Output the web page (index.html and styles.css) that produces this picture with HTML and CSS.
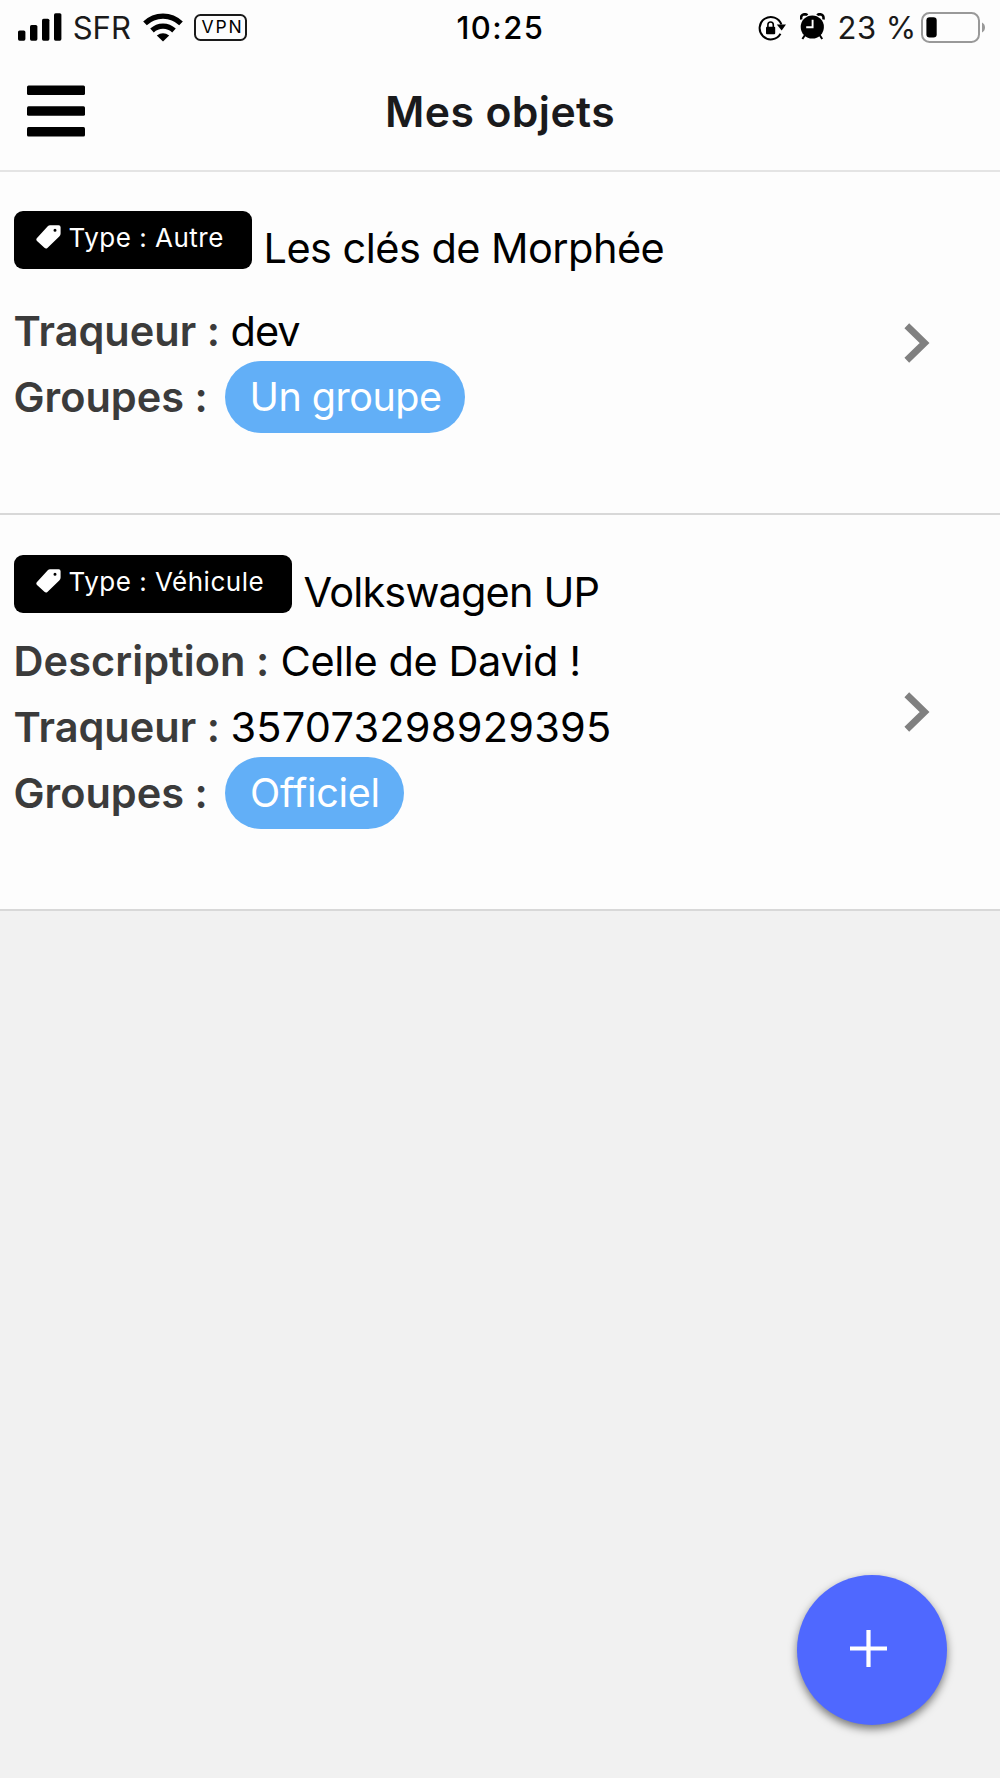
FILE: index.html
```
<!DOCTYPE html>
<html lang="fr">
<head>
<meta charset="utf-8">
<title>Mes objets</title>
<link rel="stylesheet" href="styles.css">
</head>
<body>
<div class="status">
  <div class="status-left">
    <svg class="signal" width="44" height="28" viewBox="0 0 44 28"><rect x="0" y="17.5" width="7.4" height="10.2" rx="1.6"/><rect x="12" y="12" width="7.4" height="15.7" rx="1.6"/><rect x="24" y="5.700" width="7.400" height="22" rx="1.600"/><rect x="36" y="0.200" width="7.400" height="27.500" rx="1.600"/></svg>
    <span class="carrier">SFR</span>
    <svg class="wifi" width="40" height="29" viewBox="0 0 40 29"><g fill="none" stroke="#000" stroke-width="5.200"><path d="M2 10.400C12 0.600 28 0.600 38 10.400"/><path d="M9 17.500C15.300 11.600 24.700 11.600 31 17.500"/></g><path d="M20 28.500L13.800 22.600Q20 17.800 26.200 22.600Z"/></svg>
    <span class="vpn">VPN</span>
  </div>
  <div class="clock">10:25</div>
  <div class="status-right">
    <svg class="lock" width="28" height="26" viewBox="0 0 28 26"><path d="M22.500 18.800A11.200 11.200 0 1 1 23.400 9.500" fill="none" stroke="#000" stroke-width="2"/><path d="M18.800 9.600H28L23.700 15.400Z"/><rect x="8" y="11.800" width="9.200" height="7.400" rx="1"/><path d="M9.900 12.500V9.700a2.700 2.700 0 0 1 5.400 0V12.500" fill="none" stroke="#000" stroke-width="1.600"/></svg>
    <svg class="alarm" width="25" height="27" viewBox="0 0 25 27"><circle cx="12.300" cy="14" r="11.600"/><path d="M5 22L2.400 26M19.600 22l2.600 4" stroke="#000" stroke-width="2"/><path d="M1.200 6.600Q.3 1.500 4.800 1.200Q6.500 1.200 7.300 2.200M23.400 6.600Q24.300 1.500 19.800 1.200Q18.100 1.200 17.300 2.200" fill="none" stroke="#000" stroke-width="2.600"/><path d="M12.600 6.800V14.300H6.200" fill="none" stroke="#fff" stroke-width="1.900"/></svg>
    <span class="percent">23 %</span>
    <svg class="battery" width="64" height="31" viewBox="0 0 64 31"><rect x="1" y="1" width="57" height="29" rx="7.500" fill="none" stroke="#999" stroke-width="2"/><rect x="5.400" y="5.200" width="10.300" height="20.200" rx="3.200"/><path d="M61 10.500Q64 12.200 64 15.500T61 20.500Z" fill="#999"/></svg>
  </div>
</div>
<header class="header">
  <svg class="menu" width="58" height="52" viewBox="0 0 58 52"><rect y="0.500" width="58" height="9.500" rx="1.500"/><rect y="21.300" width="58" height="9.500" rx="1.500"/><rect y="42" width="58" height="9.500" rx="1.500"/></svg>
  <h1 class="title">Mes objets</h1>
</header>
<main>
  <section class="item">
    <div class="body">
      <div class="head">
        <span class="badge"><svg class="tag" width="25" height="24" viewBox="0 0 25 24"><path fill-rule="evenodd" d="M14 .2H22.600Q24.600 .2 24.600 2.200V8.600Q24.600 10.200 23.500 11.300L11.400 23Q9.900 24.300 8.400 22.800L1 16Q-.4 14.600 1 13.100L12 1.100Q12.900 .2 14 .2ZM19 3.800a1.500 1.500 0 1 0 0 3a1.500 1.500 0 1 0 0-3Z"/></svg>Type : Autre</span>
        <span class="name">Les clés de Morphée</span>
      </div>
      <div class="line"><b class="label">Traqueur :</b><span class="value dev">dev</span></div>
      <div class="line"><b class="label groups">Groupes :</b><span class="pill">Un groupe</span></div>
    </div>
    <svg class="chevron" width="26" height="40" viewBox="0 0 26 40"><path d="M2.800 2.700L20.600 20L2.800 37.300" fill="none" stroke="#808080" stroke-width="6.800"/></svg>
  </section>
  <section class="item second">
    <div class="body">
      <div class="head">
        <span class="badge"><svg class="tag" width="25" height="24" viewBox="0 0 25 24"><path fill-rule="evenodd" d="M14 .2H22.600Q24.600 .2 24.600 2.200V8.600Q24.600 10.200 23.500 11.300L11.400 23Q9.900 24.300 8.400 22.800L1 16Q-.4 14.600 1 13.100L12 1.100Q12.900 .2 14 .2ZM19 3.800a1.500 1.500 0 1 0 0 3a1.500 1.500 0 1 0 0-3Z"/></svg>Type : Véhicule</span>
        <span class="name">Volkswagen UP</span>
      </div>
      <div class="line"><b class="label description">Description :</b><span class="value text">Celle de David !</span></div>
      <div class="line"><b class="label">Traqueur :</b><span class="value number">357073298929395</span></div>
      <div class="line"><b class="label groups">Groupes :</b><span class="pill official">Officiel</span></div>
    </div>
    <svg class="chevron" width="26" height="40" viewBox="0 0 26 40"><path d="M2.800 2.700L20.600 20L2.800 37.300" fill="none" stroke="#808080" stroke-width="6.800"/></svg>
  </section>
</main>
<button class="fab" aria-label="Ajouter"><svg width="37" height="37" viewBox="0 0 37 37"><path d="M18.500 0V37M0 18.500H37" stroke="#fff" stroke-width="4.200"/></svg></button>
</body>
</html>
```
FILE: styles.css
```
* { box-sizing: border-box; }
body {
  margin: 0;
  min-height: 1778px;
  background: #f1f1f1;
  color: #000;
  font-family: Inter, "Liberation Sans", sans-serif;
  white-space: nowrap;
}
svg { display: block; flex: none; }

.status {
  display: grid;
  grid-template-columns: 1fr auto 1fr;
  align-items: center;
  height: 54px;
  background: #fdfdfd;
  font-size: 31px;
  line-height: 55px;
}
.status-left, .status-right { display: flex; align-items: center; height: 54px; }
.status-left { padding-left: 17.700px; }
.status-right { justify-content: flex-end; padding-right: 15px; }
.signal { margin-top: -1.600px; }
.carrier { width: 58px; margin-left: 11px; color: #1a1a1a; }
.wifi { margin-left: 12.500px; }
.vpn {
  width: 53px;
  height: 26.500px;
  margin-left: 11.300px;
  padding-left: 5px;
  border: 2px solid #1a1a1a;
  border-radius: 6.500px;
  font-size: 17.500px;
  line-height: 22.500px;
  letter-spacing: 1.900px;
}
.clock { font-weight: 500; letter-spacing: 1.500px; padding-left: 1px; }
.lock { margin-right: 14px; }
.alarm { margin: -2px 13px 0 0; }
.percent { width: 76px; margin-right: 7.500px; color: #1a1a1a; letter-spacing: .5px; }
.battery { margin-top: -1px; }

.header {
  display: grid;
  grid-template-columns: 1fr auto 1fr;
  align-items: center;
  height: 118px;
  padding-left: 27px;
  padding-right: 27px;
  border-bottom: 2px solid #e4e4e4;
  background: #fdfdfd;
}
.menu { margin-top: -2px; }
.title {
  margin: 0;
  color: #1a1a1c;
  font-size: 42.700px;
  line-height: 60px;
  font-weight: 600;
  letter-spacing: .4px;
}

.item {
  display: flex;
  align-items: center;
  justify-content: space-between;
  height: 343px;
  padding: 0 70px 0 13.500px;
  border-bottom: 2px solid #d8d8d8;
  background: #fdfdfd;
}
.item.second { height: 396px; }
.body { align-self: flex-start; padding-top: 39px; }
.second .body { padding-top: 40px; }
.head { display: flex; height: 58px; margin-bottom: 29px; }
.second .head { margin-bottom: 15px; }
.badge {
  display: flex;
  align-items: center;
  width: 238px;
  height: 58px;
  padding: 0 0 5px 22px;
  border-radius: 9px;
  background: #000;
  color: #fff;
  font-size: 26px;
  letter-spacing: .5px;
}
.second .badge { width: 278px; }
.tag { margin: -1px 8px 0 0; fill: #fff; }
.name {
  padding-top: 8px;
  margin-left: 12px;
  font-size: 41.500px;
  line-height: 58px;
  letter-spacing: -.54px;
}
.second .name { letter-spacing: -.85px; }
.line {
  display: flex;
  align-items: center;
  height: 66px;
  font-size: 41.500px;
  line-height: 66px;
}
.label { width: 217px; color: #3b3b3b; font-weight: 600; }
.label.groups { width: 211.500px; }
.label.description { width: 267px; letter-spacing: .07px; }
.dev { letter-spacing: -1px; }
.text { letter-spacing: -.41px; }
.number { letter-spacing: .22px; }
.pill {
  width: 240px;
  height: 72px;
  padding-left: 24.500px;
  border-radius: 36px;
  background: #62aff7;
  color: #fff;
  font-size: 39.500px;
  line-height: 73px;
  letter-spacing: -.5px;
}
.pill.official { width: 178.500px; letter-spacing: -.3px; padding-left: 25px; }

.fab {
  position: fixed;
  left: 797px;
  top: 1575px;
  display: flex;
  align-items: center;
  justify-content: center;
  width: 150px;
  height: 150px;
  padding: 0 6.500px 3px 0;
  border: 0;
  border-radius: 50%;
  background: #4f68ff;
  box-shadow: 0 4px 9px rgba(0, 0, 0, .5);
}
```
